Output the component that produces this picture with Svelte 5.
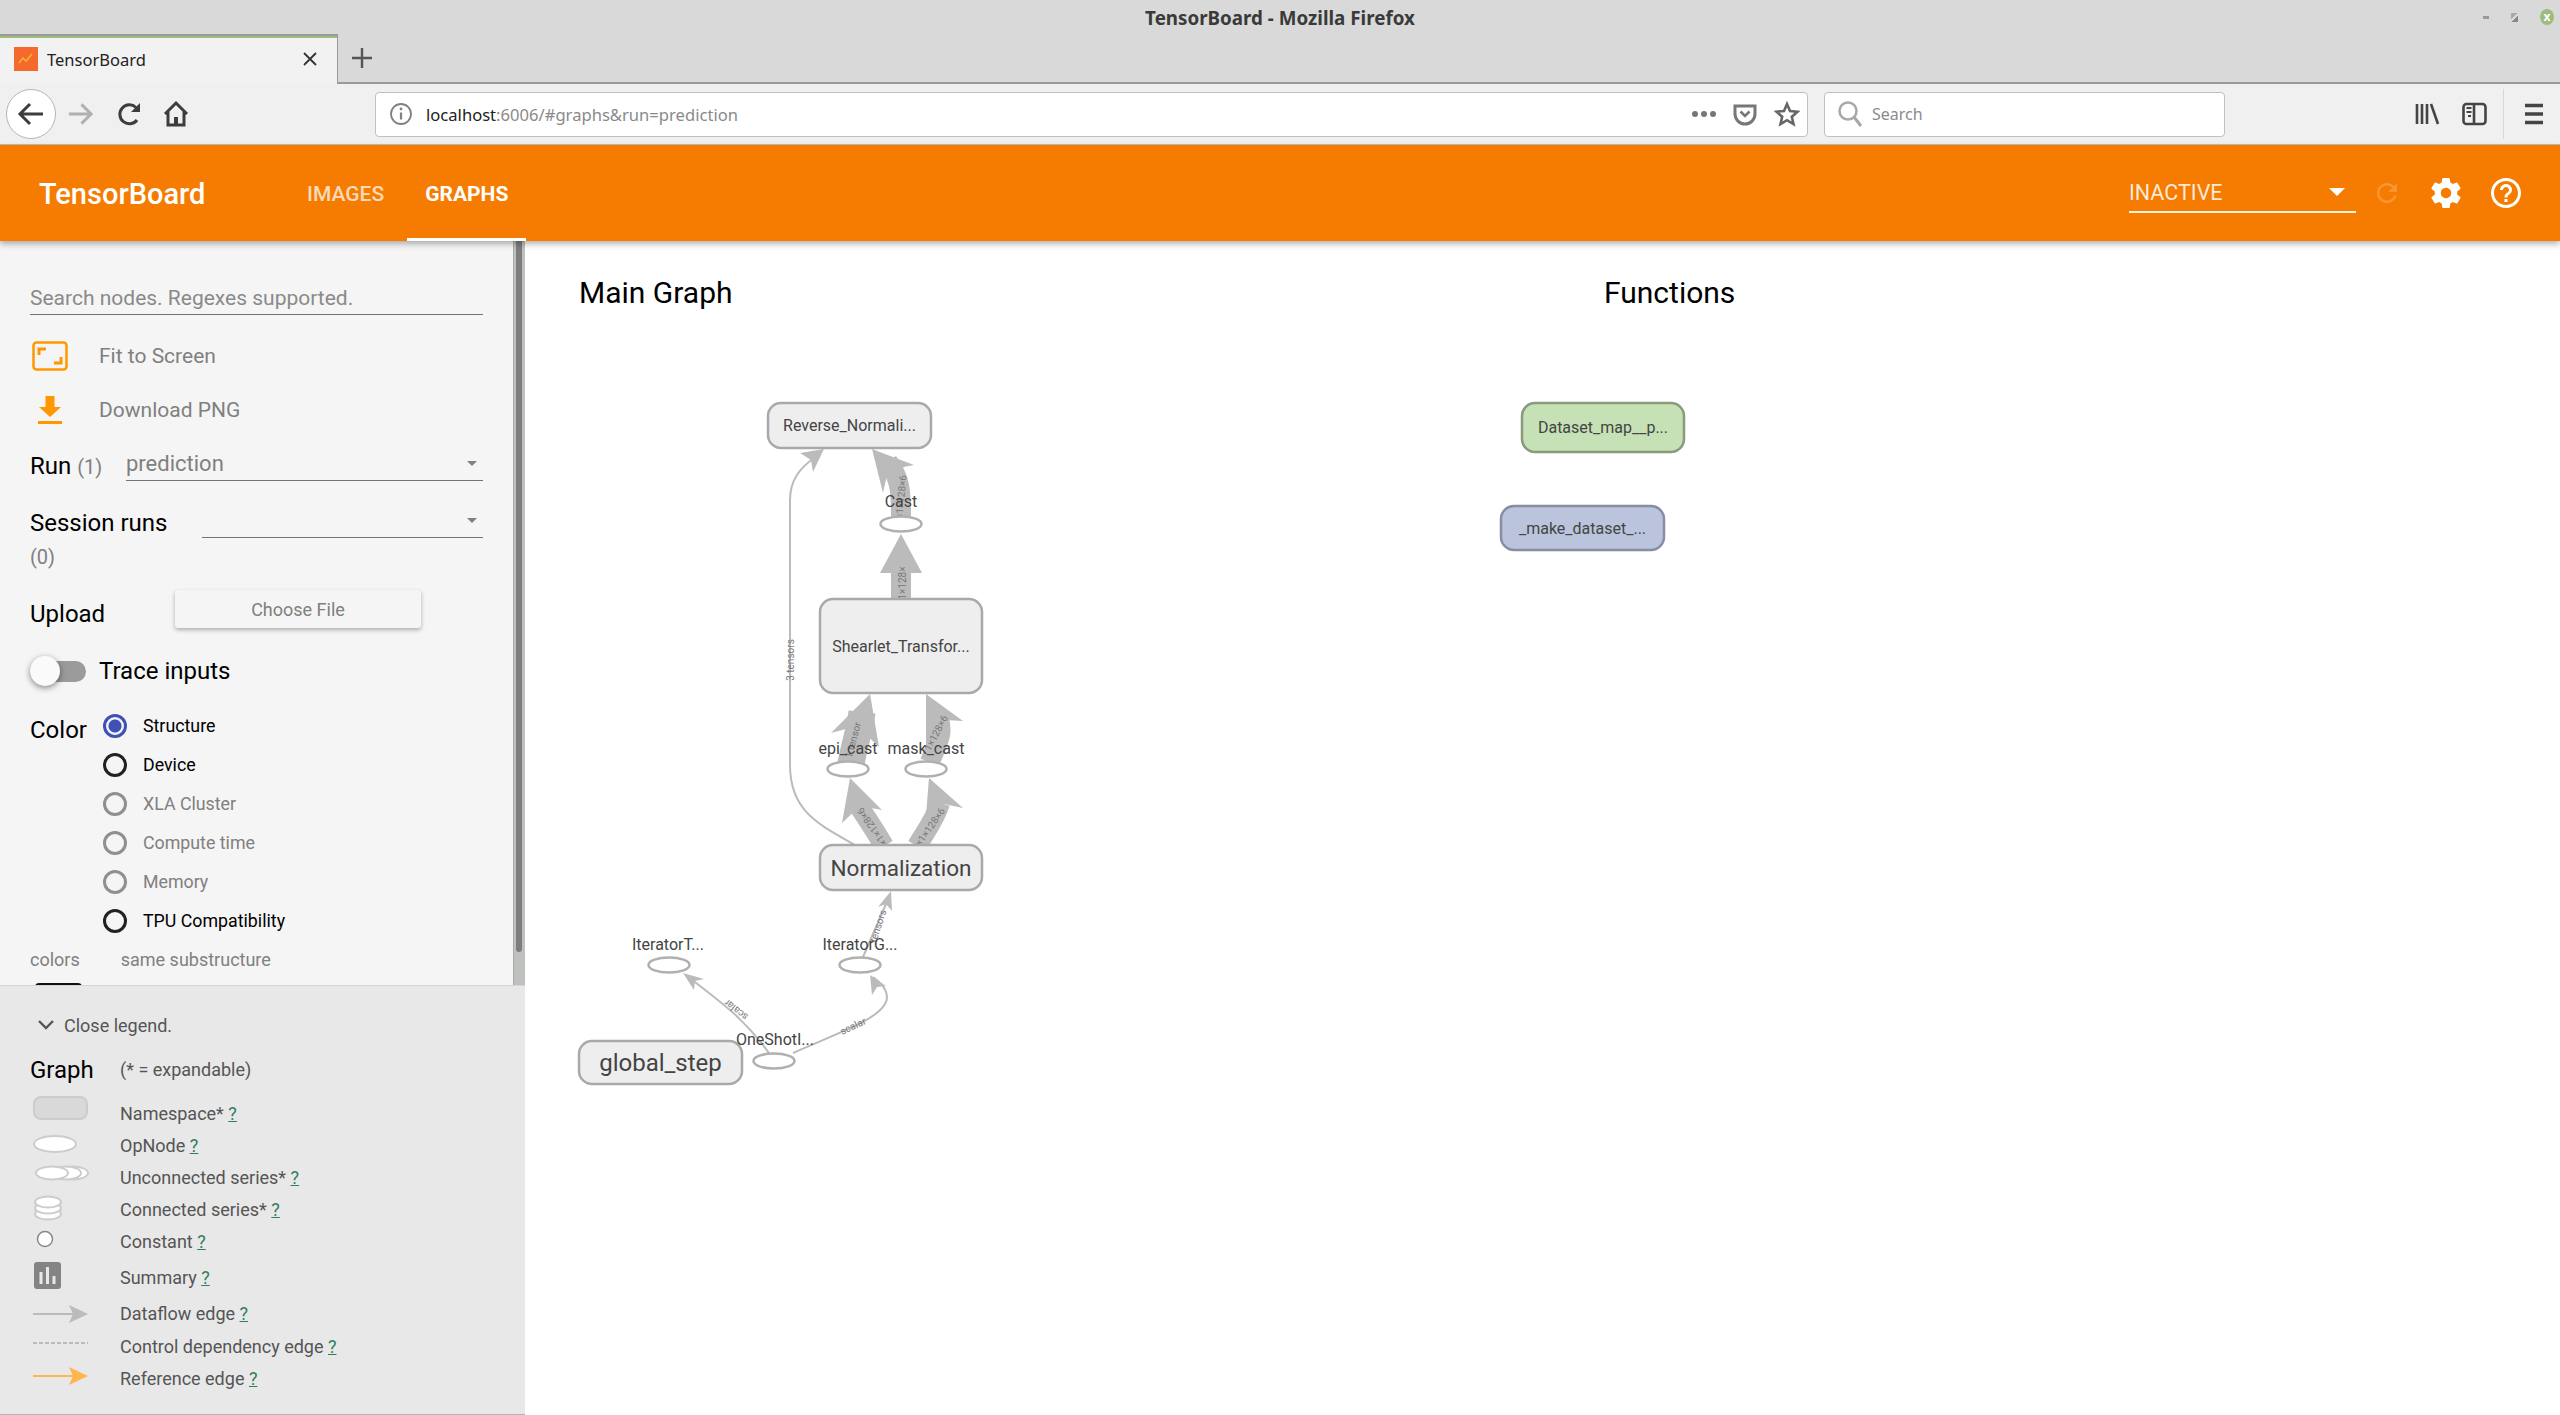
<script>
  const radios = [
    { label: "Structure", state: "on" },
    { label: "Device", state: "dark" },
    { label: "XLA Cluster", state: "off" },
    { label: "Compute time", state: "off" },
    { label: "Memory", state: "off" },
    { label: "TPU Compatibility", state: "dark" }
  ];

  const legend = [
    { kind: "namespace", label: "Namespace*", h: 32 },
    { kind: "opnode", label: "OpNode", h: 32 },
    { kind: "unconnected", label: "Unconnected series*", h: 32 },
    { kind: "connected", label: "Connected series*", h: 32 },
    { kind: "constant", label: "Constant", h: 32 },
    { kind: "summary", label: "Summary", h: 40 },
    { kind: "dataflow", label: "Dataflow edge", h: 33 },
    { kind: "control", label: "Control dependency edge", h: 32 },
    { kind: "reference", label: "Reference edge", h: 32 }
  ];

  const boxes = [
    { x: 768, y: 403, w: 163, h: 45, text: "Reverse_Normali...", cls: "" },
    { x: 820, y: 599, w: 162, h: 94, text: "Shearlet_Transfor...", cls: "" },
    { x: 820, y: 845, w: 162, h: 45, text: "Normalization", cls: "big" },
    { x: 579, y: 1041, w: 163, h: 43, text: "global_step", cls: "bigger" },
    { x: 1522, y: 403, w: 162, h: 49, text: "Dataset_map__p...", cls: "green" },
    { x: 1501, y: 506, w: 163, h: 44, text: "_make_dataset_...", cls: "blue" }
  ];

  const ops = [
    { x: 901, y: 524, lx: 901, ly: 501, text: "Cast" },
    { x: 848, y: 769, lx: 848, ly: 748, text: "epi_cast" },
    { x: 926, y: 769, lx: 926, ly: 748, text: "mask_cast" },
    { x: 669, y: 965, lx: 668, ly: 944, text: "IteratorT..." },
    { x: 860, y: 965, lx: 860, ly: 944, text: "IteratorG..." },
    { x: 774, y: 1061, lx: 775, ly: 1039, text: "OneShotI..." }
  ];

  const edgeLabels = [
    { x: 790, y: 660, r: -90, text: "3 tensors" },
    { x: 901, y: 497, r: -85, text: "×1×128×6" },
    { x: 902, y: 583, r: -90, text: "1×128×" },
    { x: 853, y: 740, r: -75, text: "1 tensor" },
    { x: 936, y: 733, r: -62, text: "1×128×6" },
    { x: 872, y: 827, r: 235, text: "×1×128×6" },
    { x: 930, y: 827, r: -55, text: "×1×128×6" },
    { x: 878, y: 926, r: -72, text: "tensors" },
    { x: 736, y: 1010, r: 218, text: "scalar" },
    { x: 853, y: 1026, r: -25, text: "scalar" }
  ];
</script>

<div class="page">
  <div class="titlebar">
    <span class="wintitle">TensorBoard - Mozilla Firefox</span>
    <div class="winbtns">
      <span class="minbtn"></span>
      <span class="maxbtn"></span>
      <span class="closebtn">x</span>
    </div>
  </div>

  <div class="tabstrip">
    <div class="tab">
      <span class="favicon">
        <svg width="24" height="24" viewBox="0 0 24 24"><path d="M5 16l4-5 3 3 6-7" fill="none" stroke="#fbb034" stroke-width="1.6"/></svg>
      </span>
      <span class="tabtitle">TensorBoard</span>
      <svg class="tabclose" width="16" height="16" viewBox="0 0 16 16"><path d="M2 2l12 12M14 2L2 14" stroke="#333" stroke-width="1.8"/></svg>
    </div>
    <svg class="newtab" width="22" height="22" viewBox="0 0 22 22"><path d="M11 1v20M1 11h20" stroke="#555" stroke-width="2.4"/></svg>
  </div>

  <div class="toolbar">
    <div class="backbtn">
      <svg width="28" height="28" viewBox="0 0 28 28"><path d="M26 14H4M13 4L3 14l10 10" fill="none" stroke="#3d3d3d" stroke-width="3"/></svg>
    </div>
    <svg class="fwd" width="27" height="28" viewBox="0 0 28 28"><path d="M2 14h22M15 4l10 10-10 10" fill="none" stroke="#b0b0b0" stroke-width="3"/></svg>
    <svg class="reload" width="25" height="28" viewBox="0 0 25 28"><path d="M20 20a9.5 9.5 0 1 1-1-12.5" fill="none" stroke="#3d3d3d" stroke-width="3"/><path d="M23 3v9h-9z" fill="#3d3d3d"/></svg>
    <svg class="home" width="26" height="28" viewBox="0 0 26 28"><path d="M2 14L13 3l11 11M5 12v13h16V12" fill="none" stroke="#3d3d3d" stroke-width="3"/><rect x="11" y="17" width="4" height="8" fill="#3d3d3d"/></svg>

    <div class="urlbar">
      <svg class="info" width="24" height="24" viewBox="0 0 24 24"><circle cx="12" cy="12" r="10" fill="none" stroke="#808080" stroke-width="1.8"/><path d="M12 10.5v7" stroke="#808080" stroke-width="2.2"/><circle cx="12" cy="7" r="1.4" fill="#808080"/></svg>
      <span class="url"><span class="host">localhost</span>:6006/#graphs&amp;run=prediction</span>
      <span class="dots"><i></i><i></i><i></i></span>
      <svg class="pocket" width="24" height="24" viewBox="0 0 24 24"><path d="M2 4h20v8a10 10 0 0 1-20 0z" fill="none" stroke="#777" stroke-width="3"/><path d="M7.5 9.5L12 14l4.5-4.5" fill="none" stroke="#777" stroke-width="2.6"/></svg>
      <svg class="star" width="26" height="26" viewBox="0 0 26 26"><path d="M13 3l3 7 7.500 .7-5.700 5 1.700 7.300L13 19.200 6.500 23l1.700-7.300-5.700-5L10 10z" fill="none" stroke="#666" stroke-width="2.600"/></svg>
    </div>

    <div class="searchbar">
      <svg width="26" height="28" viewBox="0 0 26 28"><circle cx="11" cy="11" r="8.500" fill="none" stroke="#a8a8a8" stroke-width="2.500"/><path d="M17 17l7 9" stroke="#a8a8a8" stroke-width="3"/></svg>
      <span>Search</span>
    </div>

    <div class="toolright">
      <svg width="25" height="24" viewBox="0 0 25 24"><path d="M2 2v20M7 2v20M12 2v20M16 2l7 20" stroke="#444" stroke-width="2.600" fill="none"/></svg>
      <svg width="25" height="24" viewBox="0 0 25 24"><rect x="1.500" y="2" width="22" height="20" rx="3" fill="none" stroke="#444" stroke-width="2.600"/><path d="M12 2v20" stroke="#444" stroke-width="2.600"/><path d="M4.500 6h5M4.500 10h5M6 14h3" stroke="#444" stroke-width="1.800"/></svg>
      <span class="toolsep"></span>
      <svg width="27" height="22" viewBox="0 0 27 22"><path d="M1 2.500h18M1 11h18M1 19.500h18" stroke="#444" stroke-width="3.400" transform="translate(4 0)"/></svg>
    </div>
  </div>

  <header class="tbheader">
    <span class="brand">TensorBoard</span>
    <nav class="tabs">
      <span class="navtab">IMAGES</span>
      <span class="navtab active">GRAPHS</span>
    </nav>
    <div class="headright">
      <div class="inactive">
        <span>INACTIVE</span>
        <i class="caret-white"></i>
      </div>
      <svg class="refresh" width="30" height="30" viewBox="0 0 24 24"><path d="M17.650 6.350C16.200 4.900 14.210 4 12 4c-4.420 0-7.990 3.580-7.990 8s3.570 8 7.990 8c3.730 0 6.840-2.550 7.730-6h-2.080c-.82 2.330-3.040 4-5.650 4-3.310 0-6-2.690-6-6s2.690-6 6-6c1.660 0 3.140.69 4.220 1.780L13 11h7V4l-2.350 2.350z" fill="#fff" opacity="0.2"/></svg>
      <svg class="gear" width="36" height="36" viewBox="0 0 24 24"><path d="M19.430 12.980c.04-.32.07-.64.07-.98s-.03-.66-.07-.98l2.110-1.650c.19-.15.24-.42.12-.64l-2-3.460c-.12-.22-.39-.3-.61-.22l-2.490 1c-.52-.4-1.080-.73-1.690-.98l-.38-2.650C14.460 2.180 14.250 2 14 2h-4c-.25 0-.46.18-.49.42l-.38 2.650c-.61.25-1.170.59-1.690.98l-2.490-1c-.23-.09-.49 0-.61.22l-2 3.460c-.13.22-.07.49.12.64l2.110 1.650c-.04.32-.07.65-.07.98s.03.66.07.98l-2.110 1.650c-.19.15-.24.42-.12.64l2 3.460c.12.22.39.3.61.22l2.490-1c.52.4 1.080.73 1.690.98l.38 2.650c.03.24.24.42.49.42h4c.25 0 .46-.18.49-.42l.38-2.650c.61-.25 1.170-.59 1.690-.98l2.490 1c.23.09.49 0 .61-.22l2-3.460c.12-.22.07-.49-.12-.64l-2.110-1.650zM12 15.500c-1.930 0-3.500-1.570-3.500-3.500s1.570-3.500 3.500-3.500 3.500 1.570 3.500 3.500-1.570 3.500-3.500 3.500z" fill="#fff"/></svg>
      <svg class="help" width="36" height="36" viewBox="0 0 24 24"><path d="M11 18h2v-2h-2v2zm1-16C6.480 2 2 6.480 2 12s4.480 10 10 10 10-4.480 10-10S17.520 2 12 2zm0 18c-4.410 0-8-3.590-8-8s3.590-8 8-8 8 3.590 8 8-3.590 8-8 8zm0-14c-2.210 0-4 1.790-4 4h2c0-1.100.9-2 2-2s2 .9 2 2c0 2-3 1.750-3 5h2c0-2.250 3-2.500 3-5 0-2.210-1.790-4-4-4z" fill="#fff"/></svg>
    </div>
  </header>

  <div class="body">
    <aside class="sidebar">
      <div class="controls">
        <div class="search">Search nodes. Regexes supported.</div>

        <div class="action">
          <span class="acticon">
            <svg width="36" height="30" viewBox="0 0 36 30"><rect x="1.500" y="1.500" width="33" height="27" rx="3" fill="none" stroke="#ff9800" stroke-width="2.500"/><path d="M7 14V8h7M29 16v6h-7" fill="none" stroke="#ff9800" stroke-width="3"/></svg>
          </span>
          Fit to Screen
        </div>
        <div class="action dl">
          <span class="acticon">
            <svg width="24" height="30" viewBox="0 0 24 30"><path d="M7.500 1h9v11H23L12 22 1 12h6.500z" fill="#ff9800"/><rect x="0" y="26" width="24" height="3" fill="#ff9800"/></svg>
          </span>
          Download PNG
        </div>

        <div class="selrow run">
          <span class="lbl">Run <span class="count">(1)</span></span>
          <div class="select"><span>prediction</span><i class="caret"></i></div>
        </div>
        <div class="selrow session">
          <span class="lbl">Session runs</span>
          <div class="select"><i class="caret"></i></div>
        </div>
        <div class="count zero">(0)</div>

        <div class="upload">
          <span class="lbl">Upload</span>
          <div class="choose">Choose File</div>
        </div>

        <div class="trace">
          <span class="toggle"><i></i></span>
          <span class="lbl">Trace inputs</span>
        </div>

        <div class="colorrow">
          <span class="lbl">Color</span>
          <div class="radios">
            {#each radios as r}
              <div class="radio {r.state}">
                <span class="dot"></span>
                <span>{r.label}</span>
              </div>
            {/each}
          </div>
        </div>

        <div class="colors">
          <span>colors</span>
          <span>same substructure</span>
        </div>
        <div class="swatch"></div>
      </div>
      <div class="scrolltrack"><div class="thumb"></div></div>

      <section class="legend">
        <div class="closeleg">
          <svg width="18" height="12" viewBox="0 0 18 12"><path d="M2 2l7 7 7-7" fill="none" stroke="#555" stroke-width="2.400"/></svg>
          <span>Close legend.</span>
        </div>
        <div class="graphhead">
          <span class="lbl">Graph</span>
          <span class="expand">(* = expandable)</span>
        </div>
        {#each legend as row}
          <div class="legrow" style="height: {row.h}px">
            <span class="legicon">
              <svg width="60" height="30" viewBox="0 0 60 30">
                {#if row.kind === "namespace"}
                  <rect x="4" y="-1" width="53" height="22" rx="7" fill="#d9d9d9" stroke="#ccc" stroke-width="2"/>
                {:else if row.kind === "opnode"}
                  <ellipse cx="25" cy="14" rx="21" ry="8" fill="#fff" stroke="#ccc" stroke-width="2"/>
                {:else if row.kind === "unconnected"}
                  <ellipse cx="43" cy="11" rx="15" ry="6.500" fill="#fff" stroke="#ccc" stroke-width="2"/>
                  <ellipse cx="36" cy="11" rx="15" ry="6.500" fill="#fff" stroke="#ccc" stroke-width="2"/>
                  <ellipse cx="22" cy="11" rx="16" ry="6.500" fill="#fff" stroke="#ccc" stroke-width="2"/>
                {:else if row.kind === "connected"}
                  <ellipse cx="18" cy="20" rx="13" ry="5.500" fill="#fff" stroke="#ccc" stroke-width="2"/>
                  <ellipse cx="18" cy="14" rx="13" ry="5.500" fill="#fff" stroke="#ccc" stroke-width="2"/>
                  <ellipse cx="18" cy="8" rx="13" ry="5.500" fill="#fff" stroke="#ccc" stroke-width="2"/>
                {:else if row.kind === "constant"}
                  <circle cx="15" cy="13" r="7.500" fill="#fff" stroke="#888" stroke-width="1.500"/>
                {:else if row.kind === "summary"}
                  <rect x="4" y="0" width="27" height="27" rx="3" fill="#848484"/>
                  <path d="M9.500 10v12h3V10zM16 5v17h3V5zM22.500 14v8h3v-8z" fill="#e8e8e8"/>
                {:else if row.kind === "dataflow"}
                  <path d="M3 15h40" stroke="#bbb" stroke-width="2"/>
                  <path d="M39 6l19 9-19 9 4-9z" fill="#bbb"/>
                {:else if row.kind === "control"}
                  <path d="M3 12h55" stroke="#bbb" stroke-width="2" stroke-dasharray="4 2"/>
                {:else}
                  <path d="M3 13h40" stroke="#ffb74d" stroke-width="2"/>
                  <path d="M39 4l19 9-19 9 4-9z" fill="#ffb74d"/>
                {/if}
              </svg>
            </span>
            <span class="legtext">{row.label} <u>?</u></span>
          </div>
        {/each}
      </section>
    </aside>

    <main class="board">
      <div class="heads">
        <h2 class="mainhead">Main Graph</h2>
        <h2>Functions</h2>
      </div>

      <svg class="canvas" width="2035" height="1174" viewBox="525 241 2035 1174">
        <!-- thin edges -->
        <g fill="none" stroke="#bbb" stroke-width="2">
          <path d="M855 845C820 825 790 812 790 765V500C790 480 800 468 814 458"/>
          <path d="M863 957L889 897"/>
          <path d="M769 1053C745 1020 725 1005 687 976"/>
          <path d="M793 1053C840 1032 887 1017 887 997C887 988 880 982 873 977"/>
        </g>
        <g fill="#bbb">
          <path d="M824 449L800 453 811 460 813 472z"/>
          <path d="M891 891L878 907 886 904 892 911z"/>
          <path d="M683 973L694 990 695 981 704 979z"/>
          <path d="M870 975L872 995 877 987 886 986z"/>
        </g>

        <!-- wide edges -->
        <g fill="none" stroke="#bbb" stroke-width="20">
          <path d="M901 600V570"/>
          <path d="M901 516C901 490 900 478 888 462"/>
          <path d="M930 762C936 745 945 735 938 715"/>
          <path d="M884 846C876 832 868 820 858 805"/>
          <path d="M917 846C925 832 935 820 940 803"/>
        </g>
        <path d="M851 764C854 745 860 730 862 712" fill="none" stroke="#bbb" stroke-width="27"/>
        <g fill="#bbb">
          <path d="M901 534L922 573H880z"/>
          <path d="M872 449L914 465 888 470 883 493z"/>
          <path d="M870 694L879 747 857 726 831 733z"/>
          <path d="M926 694L963 721 945 720 926 748z"/>
          <path d="M850 778L882 810 860 806 842 823z"/>
          <path d="M929 778L963 808 944 804 926 815z"/>
        </g>

        {#each edgeLabels as e}
          <text class="edgelabel" x={e.x} y={e.y} transform="rotate({e.r} {e.x} {e.y})">{e.text}</text>
        {/each}

        {#each boxes as b}
          <rect class="box {b.cls}" x={b.x} y={b.y} width={b.w} height={b.h} rx="13"/>
          <text class="boxtext {b.cls}" x={b.x + b.w / 2} y={b.y + b.h / 2}>{b.text}</text>
        {/each}

        {#each ops as o}
          <ellipse class="op" cx={o.x} cy={o.y} rx="20.500" ry="7.500"/>
          <text class="oplabel" x={o.lx} y={o.ly}>{o.text}</text>
        {/each}
      </svg>
    </main>
  </div>
</div>

<style>
  :global(body) {
    margin: 0;
    background: #fff;
  }

  * {
    box-sizing: border-box;
  }

  .page {
    width: 2560px;
    height: 1415px;
    display: flex;
    flex-direction: column;
    overflow: hidden;
    font-family: Roboto, "Noto Sans", sans-serif;
  }

  /* window chrome */
  .titlebar {
    height: 34px;
    flex: none;
    background: #d9d9d9;
    display: flex;
    align-items: center;
    justify-content: center;
    position: relative;
    padding-top: 2px;
  }

  .wintitle {
    font-family: "Noto Sans", sans-serif;
    font-weight: 700;
    font-size: 18.8px;
    color: #3a3a3a;
  }

  .winbtns {
    position: absolute;
    right: 6px;
    top: 9px;
    display: flex;
    align-items: center;
    gap: 22px;
  }

  .minbtn {
    width: 6px;
    height: 3px;
    background: #999;
  }

  .maxbtn {
    width: 7px;
    height: 9px;
    background: linear-gradient(135deg, #aaa 40%, transparent 40%, transparent 60%, #888 60%);
  }

  .closebtn {
    width: 14px;
    height: 16px;
    border-radius: 50%;
    background: #9fbc7f;
    color: #fff;
    font: 700 12px/15px "Noto Sans", sans-serif;
    text-align: center;
  }

  .tabstrip {
    height: 50px;
    flex: none;
    background: #d9d9d9;
    border-bottom: 2px solid #9a9a9a;
    display: flex;
    align-items: center;
  }

  .tab {
    width: 338px;
    height: 50px;
    background: #f2f2f2;
    border-top: 2px solid #9a9a9a;
    border-right: 1px solid #9a9a9a;
    display: flex;
    align-items: center;
    padding-left: 14px;
    padding-bottom: 2px;
    align-self: flex-start;
    position: relative;
    box-shadow: inset 0 2px 0 #9fbc7f;
  }

  .favicon {
    width: 24px;
    height: 24px;
    background: #f4692c;
    display: block;
    flex: none;
  }

  .favicon svg {
    display: block;
  }

  .tabtitle {
    margin-left: 9px;
    font-family: "Noto Sans", sans-serif;
    font-size: 16.5px;
    color: #222;
  }

  .tabclose {
    margin-left: auto;
    margin-right: 19px;
  }

  .newtab {
    margin-left: 13px;
  }

  .toolbar {
    height: 61px;
    flex: none;
    background: #f0f0f0;
    border-bottom: 1px solid #bdbdbd;
    display: flex;
    align-items: center;
    padding-left: 6px;
  }

  .backbtn {
    width: 50px;
    height: 50px;
    border: 1px solid #b5b5b5;
    border-radius: 50%;
    background: #fff;
    display: flex;
    align-items: center;
    justify-content: center;
    flex: none;
  }

  .fwd {
    margin-left: 11px;
    flex: none;
  }

  .reload {
    margin-left: 23px;
    flex: none;
  }

  .home {
    margin-left: 21px;
    flex: none;
  }

  .urlbar {
    margin-left: 186px;
    width: 1433px;
    height: 45px;
    background: #fff;
    border: 1px solid #c0c0c0;
    border-radius: 4px;
    display: flex;
    align-items: center;
    padding-left: 13px;
    flex: none;
  }

  .url {
    margin-left: 13px;
    font-family: "Noto Sans", sans-serif;
    font-size: 16.6px;
    color: #8a8a8a;
  }

  .host {
    color: #222;
  }

  .dots {
    margin-left: auto;
    display: flex;
    gap: 3px;
  }

  .dots i {
    width: 6px;
    height: 6px;
    border-radius: 50%;
    background: #777;
  }

  .pocket {
    margin-left: 17px;
  }

  .star {
    margin-left: 17px;
    margin-right: 7px;
  }

  .searchbar {
    margin-left: 16px;
    width: 401px;
    height: 45px;
    background: #fff;
    border: 1px solid #c0c0c0;
    border-radius: 4px;
    display: flex;
    align-items: center;
    gap: 9px;
    padding-left: 12px;
    font-family: "Noto Sans", sans-serif;
    font-size: 16px;
    color: #8a8a8a;
    flex: none;
  }

  .toolright {
    margin-left: 190px;
    display: flex;
    align-items: center;
    gap: 22px;
    height: 50px;
  }

  .toolsep {
    width: 1px;
    height: 50px;
    background: #d8d8d8;
    margin-left: -6px;
    margin-right: -6px;
  }

  /* tensorboard header */
  .tbheader {
    height: 96px;
    flex: none;
    background: #f57c00;
    display: flex;
    align-items: stretch;
    padding-left: 39px;
    color: #fff;
    position: relative;
    z-index: 3;
    box-shadow: 0 3px 6px rgba(0, 0, 0, 0.3);
  }

  .brand {
    font-size: 29px;
    font-weight: 500;
    width: 250px;
    line-height: 98px;
  }

  .tabs {
    display: flex;
    gap: 5px;
  }

  .navtab {
    padding: 5px 18px 0;
    font-size: 21px;
    font-weight: 500;
    color: rgba(255, 255, 255, 0.72);
    white-space: nowrap;
    display: flex;
    align-items: center;
    border-bottom: 3px solid transparent;
  }

  .navtab.active {
    color: #fff;
    font-weight: 700;
    border-bottom-color: #fff;
  }

  .headright {
    margin-left: auto;
    display: flex;
    align-items: center;
    padding-right: 36px;
  }

  .inactive {
    width: 227px;
    height: 40px;
    border-bottom: 2px solid rgba(255, 255, 255, 0.9);
    display: flex;
    align-items: center;
    justify-content: space-between;
    padding-right: 11px;
    font-size: 21.5px;
    color: rgba(255, 255, 255, 0.85);
  }

  .caret-white {
    border-left: 8px solid transparent;
    border-right: 8px solid transparent;
    border-top: 8px solid #fff;
  }

  .refresh {
    margin-left: 16px;
  }

  .gear {
    margin-left: 26px;
  }

  .help {
    margin-left: 24px;
  }

  /* body */
  .body {
    flex: 1;
    display: flex;
    min-height: 0;
  }

  .sidebar {
    width: 525px;
    flex: none;
    background: #f5f5f5;
    position: relative;
    display: flex;
    flex-direction: column;
  }

  .controls {
    height: 744px;
    flex: none;
    padding: 0 42px 0 30px;
    overflow: hidden;
  }

  .lbl {
    font-size: 24px;
    color: #000;
  }

  .count {
    font-size: 20px;
    color: #808080;
  }

  .search {
    margin-top: 41px;
    height: 33px;
    border-bottom: 1px solid #737373;
    font-size: 21px;
    color: #8a8a8a;
    line-height: 32px;
    white-space: nowrap;
  }

  .action {
    display: flex;
    align-items: center;
    height: 54px;
    font-size: 21px;
    color: #808080;
    margin-top: 14px;
  }

  .action.dl {
    margin-top: 0;
  }

  .acticon {
    width: 69px;
    flex: none;
    display: flex;
    padding-left: 2px;
  }

  .dl .acticon {
    padding-left: 8px;
  }

  .selrow {
    display: flex;
    align-items: flex-end;
    justify-content: space-between;
  }

  .selrow .lbl {
    margin-bottom: 1px;
  }

  .run {
    margin-top: 1px;
    height: 43px;
  }

  .session {
    margin-top: 14px;
    height: 43px;
  }

  .select {
    height: 40px;
    border-bottom: 1px solid #737373;
    display: flex;
    align-items: center;
    justify-content: space-between;
    padding: 5px 6px 0 0;
    font-size: 22px;
    color: #808080;
  }

  .run .select {
    width: 357px;
  }

  .session .select {
    width: 281px;
    justify-content: flex-end;
  }

  .caret {
    border-left: 5px solid transparent;
    border-right: 5px solid transparent;
    border-top: 5px solid #808080;
  }

  .zero {
    margin-top: 7px;
    line-height: 24px;
  }

  .upload {
    margin-top: 21px;
    display: flex;
    align-items: center;
    height: 38px;
  }

  .upload .lbl {
    width: 145px;
    margin-top: 10px;
  }

  .choose {
    width: 246px;
    height: 38px;
    background: #f5f5f5;
    border-radius: 3px;
    box-shadow: 0 2px 4px rgba(0, 0, 0, 0.3);
    display: flex;
    align-items: center;
    justify-content: center;
    font-size: 18px;
    color: #808080;
  }

  .trace {
    margin-top: 21px;
    display: flex;
    align-items: center;
    height: 44px;
  }

  .toggle {
    width: 56px;
    height: 21px;
    border-radius: 11px;
    background: #9b9b9b;
    position: relative;
    margin-right: 13px;
    flex: none;
  }

  .toggle i {
    position: absolute;
    left: 0;
    top: -5px;
    width: 30px;
    height: 30px;
    border-radius: 50%;
    background: #fafafa;
    box-shadow: 0 2px 6px rgba(0, 0, 0, 0.45);
  }

  .colorrow {
    display: flex;
    margin-top: 13px;
  }

  .colorrow .lbl {
    width: 73px;
    margin-top: 10px;
  }

  .radios {
    display: flex;
    flex-direction: column;
  }

  .radio {
    height: 39px;
    display: flex;
    align-items: center;
    gap: 16px;
    font-size: 17.8px;
    color: #000;
  }

  .dot {
    width: 24px;
    height: 24px;
    border: 3px solid #212121;
    border-radius: 50%;
    display: block;
    flex: none;
  }

  .radio.on .dot {
    border-color: #3f51b5;
    background: radial-gradient(circle, #3f51b5 0 6px, transparent 7px);
  }

  .radio.off {
    color: #808080;
  }

  .radio.off .dot {
    border-color: #8f8f8f;
  }

  .colors {
    display: flex;
    gap: 41px;
    font-size: 18px;
    color: #808080;
    margin-top: 8px;
    line-height: 24px;
  }

  .swatch {
    margin: 11px 0 0 5px;
    width: 47px;
    height: 8px;
    border-radius: 4px 4px 0 0;
    background: #111;
  }

  .scrolltrack {
    position: absolute;
    top: 0;
    left: 513px;
    width: 12px;
    height: 744px;
    background: #bfc1bf;
    border-left: 1px solid #aaa;
  }

  .thumb {
    margin-left: 2px;
    width: 6px;
    height: 711px;
    background: #7d7d7d;
    border-radius: 0 0 3px 3px;
  }

  .legend {
    flex: 1;
    background: #e8e8e8;
    border-top: 1px solid #d5d5d5;
    border-bottom: 1px solid #b5b5b5;
    padding: 0 0 0 30px;
    position: relative;
    z-index: 1;
  }

  .closeleg {
    display: flex;
    align-items: center;
    height: 78px;
    padding-left: 7px;
    gap: 9px;
    font-size: 18px;
    color: #555;
  }

  .graphhead {
    display: flex;
    align-items: center;
    height: 28px;
    margin-top: -8px;
    margin-bottom: 13px;
  }

  .graphhead .lbl {
    width: 90px;
  }

  .expand,
  .legtext {
    font-size: 18px;
    color: #555;
  }

  .expand {
    margin-top: -2px;
  }

  .legrow {
    display: flex;
    align-items: center;
  }

  .legicon {
    width: 90px;
    flex: none;
    display: flex;
    height: 100%;
    align-items: center;
  }

  .legicon svg {
    display: block;
    overflow: visible;
  }

  .legtext u {
    color: #2e7d5b;
  }

  /* graph area */
  .board {
    flex: 1;
    background: #fff;
    position: relative;
  }

  .heads {
    display: flex;
    padding: 36px 0 0 54px;
  }

  h2 {
    margin: 0;
    font-size: 30px;
    font-weight: 400;
    line-height: 32px;
    color: #000;
  }

  .mainhead {
    width: 1025px;
  }

  .canvas {
    position: absolute;
    left: 0;
    top: 0;
    display: block;
  }

  .box {
    fill: #eee;
    stroke: #a9a9a9;
    stroke-width: 2.500;
  }

  .box.green {
    fill: #c5e1b5;
    stroke: #8a9a7c;
  }

  .box.blue {
    fill: #bac5dd;
    stroke: #868da5;
  }

  .boxtext {
    font-size: 16px;
    fill: #444;
    text-anchor: middle;
    dominant-baseline: central;
  }

  .boxtext.big {
    font-size: 22.5px;
  }

  .boxtext.bigger {
    font-size: 24px;
  }

  .op {
    fill: #fff;
    stroke: #b0b0b0;
    stroke-width: 2.500;
  }

  .oplabel {
    font-size: 16px;
    fill: #444;
    text-anchor: middle;
    dominant-baseline: central;
  }

  .edgelabel {
    font-size: 10px;
    fill: #777;
    text-anchor: middle;
    dominant-baseline: central;
  }
</style>
